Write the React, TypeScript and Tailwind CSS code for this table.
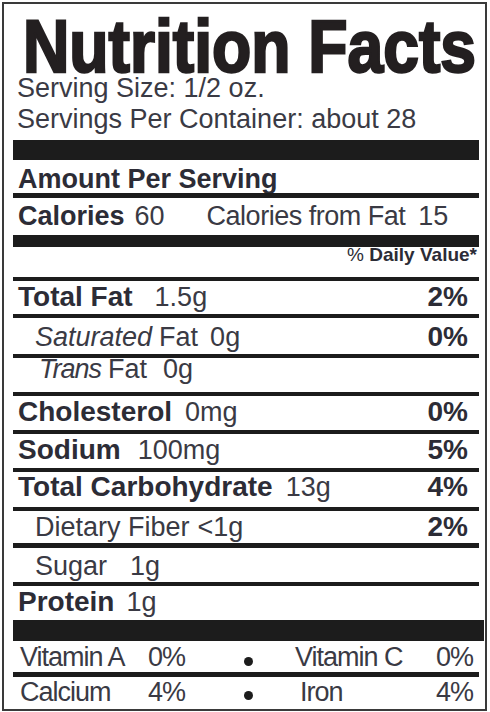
import React from "react";

function NRow({
  cls,
  children,
  pct,
}: {
  cls: string;
  children: React.ReactNode;
  pct?: string;
}) {
  return (
    <div
      className={`${cls} h-[24px] leading-[24px] flex items-baseline whitespace-nowrap pr-[11px]`}
    >
      {children}
      {pct ? <span className="ml-auto font-bold text-[28px]">{pct}</span> : null}
    </div>
  );
}

function Bar({ cls }: { cls: string }) {
  return <div className={`${cls} bg-[#1c1c1c] shrink-0`} />;
}

export default function App() {
  return (
    <div className="w-[490px] h-[712px] bg-white p-[2px] font-['Liberation_Sans',Arial,sans-serif] text-[#2c2c36]">
      <div className="w-[485px] h-[709px] border-2 border-[#3a3a3a] pl-[9px] pr-[6px] flex flex-col overflow-hidden">
        <div className="mt-[12px] h-[60px] leading-[60px] text-[75px] font-bold pl-[10px] text-[#231f20] whitespace-nowrap">
          <span className="inline-block origin-left scale-x-[0.856] [-webkit-text-stroke:2.5px_#231f20]">
            Nutrition Facts
          </span>
        </div>
        <div className="h-[24px] leading-[24px] text-[27px] pl-[4px] text-[#3a3a44] whitespace-nowrap">
          Serving Size: 1/2 oz.
        </div>
        <div className="mt-[7px] h-[24px] leading-[24px] text-[27px] pl-[4px] text-[#3a3a44] whitespace-nowrap">
          Servings Per Container: about 28
        </div>
        <Bar cls="mt-[9px] h-[20px]" />
        <div className="mt-[7px] h-[24px] leading-[24px] text-[27px] font-bold pl-[5px] whitespace-nowrap">
          Amount Per Serving
        </div>
        <Bar cls="mt-[2px] h-[5px]" />
        <div className="mt-[6px] h-[24px] leading-[24px] text-[27px] pl-[5px] flex items-baseline whitespace-nowrap">
          <span className="font-bold">Calories</span>
          <span className="ml-[10px] text-[#3a3a44]">60</span>
          <span className="ml-[42px] tracking-[-0.5px] text-[#3a3a44]">Calories from Fat</span>
          <span className="ml-[13px] text-[#3a3a44]">15</span>
        </div>
        <Bar cls="mt-[7px] h-[12px]" />
        <div className="h-[16px] leading-[16px] text-[19px] font-bold text-right pr-[2px] whitespace-nowrap">
          <span className="font-normal">%</span> Daily Value*
        </div>
        <Bar cls="mt-[14px] h-[4px]" />

        <NRow cls="mt-[4px] pl-[5px]" pct="2%">
          <span className="font-bold text-[28px]">Total Fat</span>
          <span className="ml-[22px] text-[27px] text-[#3a3a44]">1.5g</span>
        </NRow>
        <Bar cls="mt-[5px] h-[4px]" />

        <NRow cls="mt-[7px] pl-[22px]" pct="0%">
          <span className="italic text-[27px] text-[#3a3a44]">Saturated</span>
          <span className="ml-[7px] text-[27px] text-[#3a3a44]">Fat</span>
          <span className="ml-[12px] text-[27px] text-[#3a3a44]">0g</span>
        </NRow>
        <Bar cls="mt-[5px] h-[4px]" />

        <div className="mt-[1px] h-[20px] leading-[20px] flex items-baseline whitespace-nowrap pl-[26px] text-[27px] text-[#3a3a44]">
          <span className="italic tracking-[-1px]">Trans</span>
          <span className="ml-[7px]">Fat</span>
          <span className="ml-[16px]">0g</span>
        </div>
        <Bar cls="mt-[13px] h-[4px]" />

        <NRow cls="mt-[4px] pl-[5px]" pct="0%">
          <span className="font-bold text-[28px]">Cholesterol</span>
          <span className="ml-[13px] text-[27px] text-[#3a3a44]">0mg</span>
        </NRow>
        <Bar cls="mt-[6px] h-[4px]" />

        <NRow cls="mt-[4px] pl-[5px]" pct="5%">
          <span className="font-bold text-[28px]">Sodium</span>
          <span className="ml-[17px] text-[27px] text-[#3a3a44]">100mg</span>
        </NRow>
        <Bar cls="mt-[6px] h-[4px]" />

        <NRow cls="mt-[3px] pl-[5px]" pct="4%">
          <span className="font-bold text-[28px]">Total Carbohydrate</span>
          <span className="ml-[13px] text-[27px] text-[#3a3a44]">13g</span>
        </NRow>
        <Bar cls="mt-[8px] h-[4px]" />

        <NRow cls="mt-[4px] pl-[22px]" pct="2%">
          <span className="text-[27px] text-[#3a3a44]">Dietary Fiber</span>
          <span className="ml-[8px] text-[27px] text-[#3a3a44]">&lt;1g</span>
        </NRow>
        <Bar cls="mt-[4px] h-[5px]" />

        <NRow cls="mt-[6px] pl-[22px]">
          <span className="text-[27px] text-[#3a3a44]">Sugar</span>
          <span className="ml-[23px] text-[27px] text-[#3a3a44]">1g</span>
        </NRow>
        <Bar cls="mt-[4px] h-[4px]" />

        <NRow cls="mt-[4px] pl-[5px]">
          <span className="font-bold text-[28px]">Protein</span>
          <span className="ml-[12px] text-[27px] text-[#3a3a44]">1g</span>
        </NRow>
        <Bar cls="mt-[6px] h-[21px] -mr-[5px]" />

        <div className="mt-[4px] h-[24px] leading-[24px] text-[27px] pl-[7px] pr-[6px] flex items-start whitespace-nowrap tracking-[-1px] text-[#3a3a44]">
          <span className="w-[128px] shrink-0">Vitamin A</span>
          <span className="w-[96px] shrink-0">0%</span>
          <span className="mt-[12px] w-[9px] h-[9px] rounded-full bg-[#1c1c1c] shrink-0" />
          <span className="ml-[42px]">Vitamin C</span>
          <span className="ml-auto">0%</span>
        </div>
        <Bar cls="mt-[3px] h-[5px]" />
        <div className="mt-[3px] h-[24px] leading-[24px] text-[27px] pl-[7px] pr-[6px] flex items-start whitespace-nowrap tracking-[-1px] text-[#3a3a44]">
          <span className="w-[128px] shrink-0">Calcium</span>
          <span className="w-[96px] shrink-0">4%</span>
          <span className="mt-[11px] w-[9px] h-[9px] rounded-full bg-[#1c1c1c] shrink-0" />
          <span className="ml-[47px]">Iron</span>
          <span className="ml-auto">4%</span>
        </div>
      </div>
    </div>
  );
}
